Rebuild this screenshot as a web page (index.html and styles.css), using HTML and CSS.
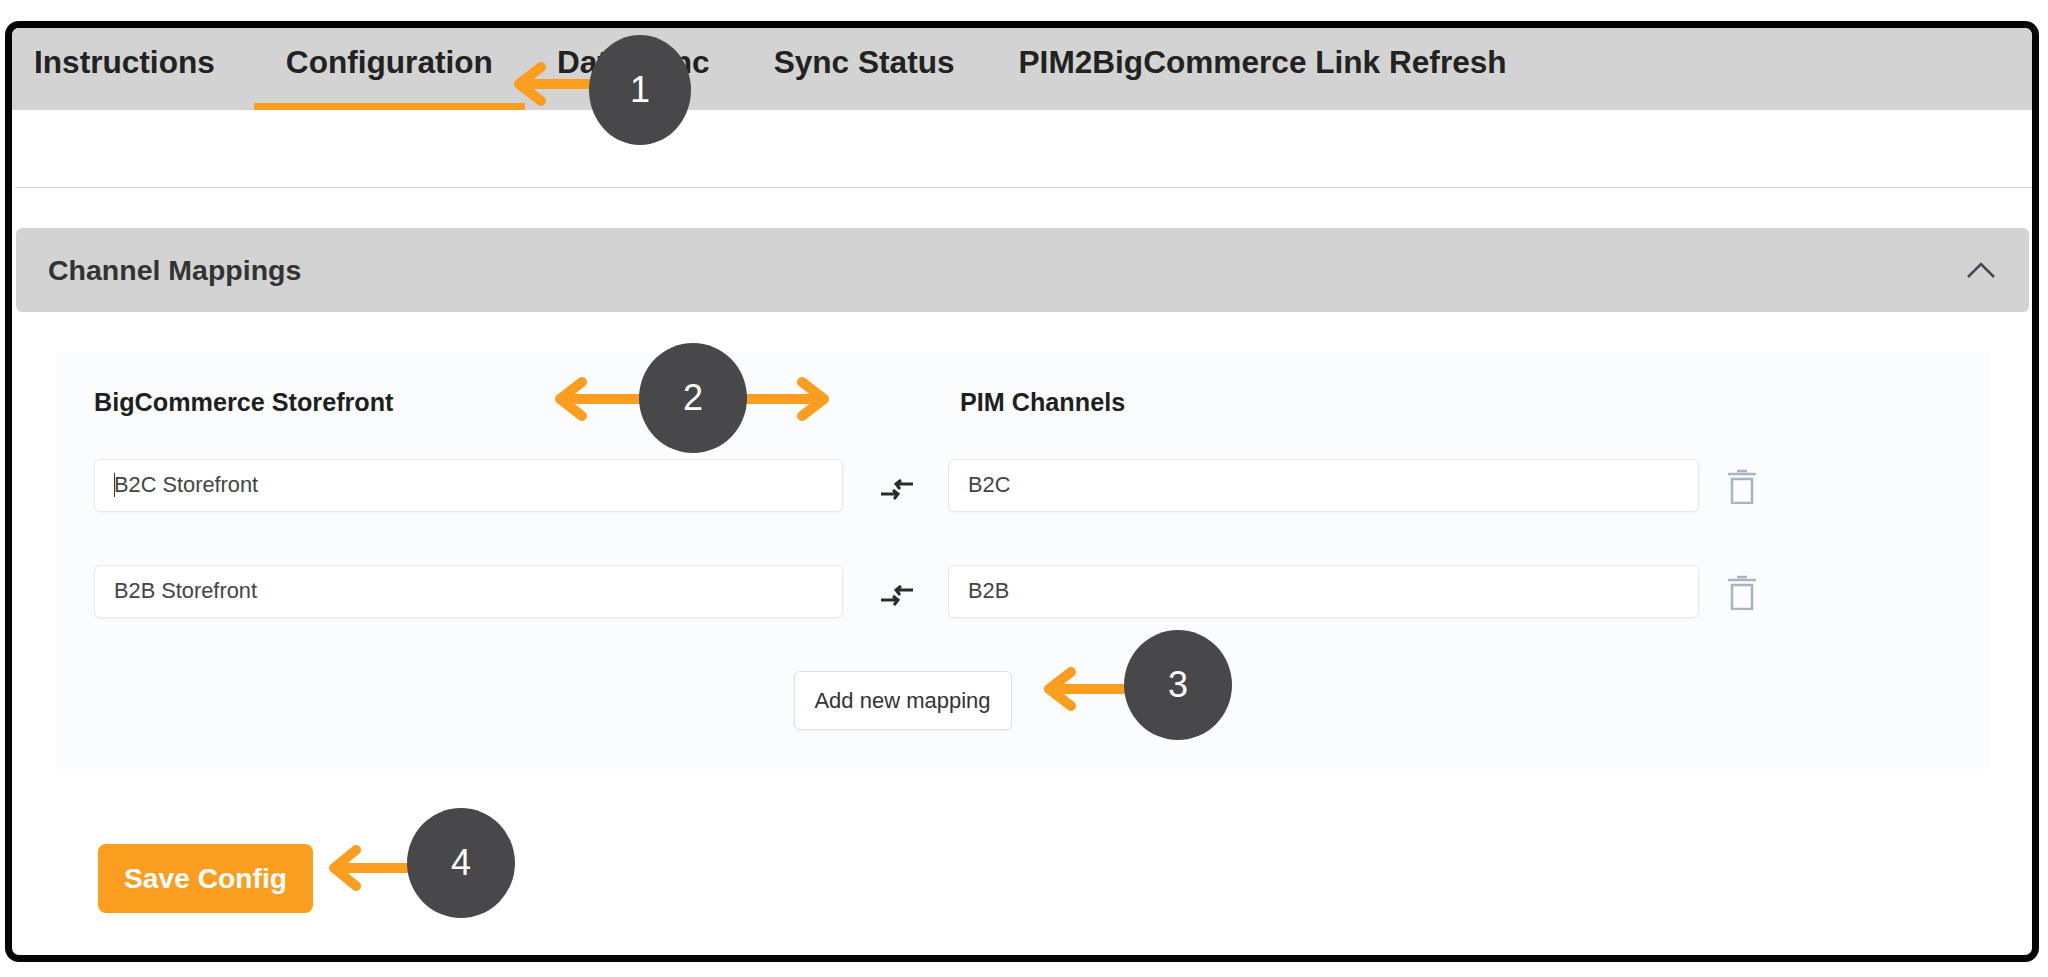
FILE: index.html
```html
<!DOCTYPE html>
<html lang="en">
<head>
    <meta charset="UTF-8">
    <title>Channel Mappings - Configuration</title>
    <link rel="stylesheet" href="styles.css">
</head>
<body>
    <div class="frame">
        <div class="tabs">
            <div class="tab tab-first">Instructions</div>
            <div class="tab active">Configuration</div>
            <div class="tab">Data Sync</div>
            <div class="tab">Sync Status</div>
            <div class="tab">PIM2BigCommerce Link Refresh</div>
        </div>
        <div class="toolbar"></div>

        <div class="section-header">
            <span>Channel Mappings</span>
            <svg class="chevron" width="28" height="16" viewBox="0 0 28 16">
                <path d="M1 15 L14 2 L27 15"/>
            </svg>
        </div>

        <div class="panel">
            <div class="map-head">
                <div class="col-title">BigCommerce Storefront</div>
                <div class="col-title col-title-right">PIM Channels</div>
            </div>

            <div class="map-row">
                <div class="field"><span class="caret"></span>B2C Storefront</div>
                <svg class="swap" width="34" height="22" viewBox="0 0 34 22">
                    <path d="M33 5 H16 M21 1 L16 5 L20 10 M1 15 H18 M13 11 L18 15 L14 20"/>
                </svg>
                <div class="field">B2C</div>
                <svg class="trash" width="30" height="36" viewBox="0 0 30 36">
                    <path d="M1 6 H29 M10 3 H20"/>
                    <rect x="5" y="11" width="20" height="24"/>
                </svg>
            </div>

            <div class="map-row">
                <div class="field">B2B Storefront</div>
                <svg class="swap" width="34" height="22" viewBox="0 0 34 22">
                    <path d="M33 5 H16 M21 1 L16 5 L20 10 M1 15 H18 M13 11 L18 15 L14 20"/>
                </svg>
                <div class="field">B2B</div>
                <svg class="trash" width="30" height="36" viewBox="0 0 30 36">
                    <path d="M1 6 H29 M10 3 H20"/>
                    <rect x="5" y="11" width="20" height="24"/>
                </svg>
            </div>

            <div class="add-row">
                <button class="add-btn">Add new mapping</button>
            </div>
        </div>

        <button class="save-btn">Save Config</button>
    </div>

    <!-- callouts drawn over the screenshot -->
    <svg class="arrows" width="2048" height="977" viewBox="0 0 2048 977">
        <path d="M600 84 H520 M541 67 L519 84 L541 101"/>
        <path d="M640 399 H560 M582 382 L560 399 L582 416"/>
        <path d="M746 399 H824 M802 382 L824 399 L802 416"/>
        <path d="M1124 689 H1049 M1071 672 L1049 689 L1071 706"/>
        <path d="M408 868 H334 M356 850 L334 868 L356 886"/>
    </svg>
    <div class="badge badge-1">1</div>
    <div class="badge badge-2">2</div>
    <div class="badge badge-3">3</div>
    <div class="badge badge-4">4</div>
</body>
</html>
```
FILE: styles.css
```css
body {
    margin: 0;
    background: #fff;
    font-family: "Liberation Sans", Arial, sans-serif;
    color: #2b2b2b;
    position: relative;
    height: 977px;
    overflow: hidden;
}

.frame {
    margin: 21px 9px 0 5px;
    height: 927px;
    border: 7px solid #050505;
    border-radius: 14px;
    overflow: hidden;
    background: #fff;
}

.tabs {
    display: flex;
    height: 82px;
    background: #d3d3d3;
}

.tab {
    padding: 0 32px;
    font-size: 31.6px;
    font-weight: bold;
    line-height: 68px;
    color: #222;
    height: 75px;
    border-bottom: 7px solid transparent;
}

.tab-first {
    padding: 0 39px 0 22px;
}

.tab.active {
    border-bottom-color: #fb9e1f;
}

.toolbar {
    height: 77px;
    margin-left: 3px;
    border-bottom: 1px solid #d3d6da;
}

.section-header {
    display: flex;
    justify-content: space-between;
    align-items: center;
    height: 84px;
    margin: 40px 3px 0 4px;
    padding: 0 34px 0 32px;
    background: #d3d3d3;
    border-radius: 6px;
    font-size: 28.5px;
    font-weight: bold;
    color: #333;
}

.chevron {
    fill: none;
    stroke: #3c4a5c;
    stroke-width: 2.5;
}

.panel {
    margin: 40px 42px 0 44px;
    padding: 30px 0 39px 38px;
    background: #fbfcfd;
}

.map-head {
    display: flex;
    height: 40px;
    margin-bottom: 37px;
    align-items: center;
}

.col-title {
    width: 866px;
    font-size: 25.2px;
    font-weight: bold;
    color: #1f1f1f;
}

.col-title-right {
    width: auto;
}

.map-row {
    display: grid;
    grid-template-columns: 749px 105px 751px 1fr;
    align-items: center;
    height: 53px;
    margin-bottom: 53px;
}

.field {
    display: flex;
    align-items: center;
    box-sizing: border-box;
    height: 53px;
    padding: 0 0 2px 19px;
    background: #fff;
    border: 1px solid #e6e8eb;
    border-radius: 6px;
    box-shadow: 0 1px 3px rgba(0, 0, 0, 0.05);
    font-size: 21.8px;
    color: #444;
}

.caret {
    width: 1px;
    height: 24px;
    margin-right: -1px;
    background: #333;
}

.swap {
    fill: none;
    stroke: #2a2a2a;
    stroke-width: 3;
    margin: 8px 0 0 37px;
}

.trash {
    fill: none;
    stroke: #a9b3c2;
    stroke-width: 2.5;
    margin-left: 28px;
}

.add-row {
    display: flex;
    justify-content: center;
    width: 1617px;
}

.add-btn {
    width: 218px;
    height: 59px;
    background: #fff;
    border: 1px solid #dde1e6;
    border-radius: 6px;
    box-shadow: 0 1px 3px rgba(0, 0, 0, 0.05);
    font-family: inherit;
    font-size: 22px;
    color: #333;
}

.save-btn {
    display: block;
    width: 215px;
    height: 69px;
    margin: 75px 0 0 86px;
    background: #fb9e1f;
    border: none;
    border-radius: 8px;
    font-family: inherit;
    font-size: 28.2px;
    font-weight: bold;
    color: #fff;
}

.arrows {
    position: absolute;
    top: 0;
    left: 0;
    fill: none;
    stroke: #fb9e1f;
    stroke-width: 10;
    stroke-linecap: round;
    stroke-linejoin: round;
}

.badge {
    position: absolute;
    display: flex;
    align-items: center;
    justify-content: center;
    width: 108px;
    height: 110px;
    border-radius: 50%;
    background: #48484a;
    color: #fff;
    font-size: 36px;
}

.badge-1 {
    left: 589px;
    top: 35px;
    width: 102px;
}

.badge-2 {
    left: 639px;
    top: 343px;
}

.badge-3 {
    left: 1124px;
    top: 630px;
}

.badge-4 {
    left: 407px;
    top: 808px;
}
```
